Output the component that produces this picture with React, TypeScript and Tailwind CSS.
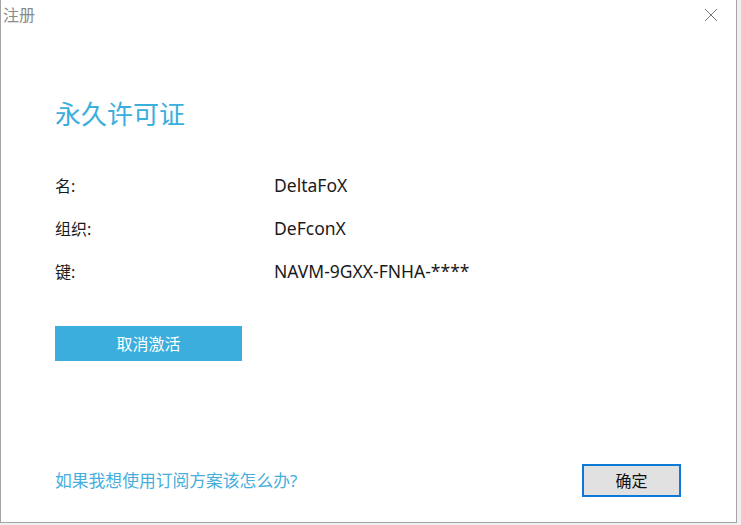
export default function App() {
  return (
    <div
      className="w-[741px] h-[525px] bg-[#f0f0f0] overflow-hidden"
      style={{ fontFamily: '"Noto Sans", "Noto Sans CJK SC", sans-serif' }}
    >
      <div className="w-[737px] h-[523px] bg-white border-l border-r border-b border-[#a5a5a5] flex flex-col">
        {/* title bar */}
        <div className="h-[30px] flex items-start justify-between">
          <span className="pl-[2px] pt-[5px] text-[16px] leading-[20px] text-[#8a8a8a]">注册</span>
          <button className="w-[30px] h-[30px] mr-[10px] flex items-center justify-center">
            <svg width="14" height="14" viewBox="0 0 14 14" fill="none" stroke="#7a7a7a" strokeWidth="1">
              <path d="M1 1L13 13M13 1L1 13" />
            </svg>
          </button>
        </div>

        <div className="flex-1 flex flex-col pl-[54px] pr-[55px]">
          <h1 className="mt-[71px] text-[26px] leading-[27px] text-[#3aaedc] font-normal">永久许可证</h1>

          <div className="mt-[36px] flex flex-col text-[16px] text-[#1a1a1a]">
            {[
              ["名:", "DeltaFoX"],
              ["组织:", "DeFconX"],
              ["键:", "NAVM-9GXX-FNHA-****"],
            ].map(([k, v]) => (
              <div key={k} className="h-[43px] flex items-center">
                <span className="w-[219px]">{k}</span>
                <span className="text-[17.5px]">{v}</span>
              </div>
            ))}
          </div>

          <button className="mt-[33px] w-[187px] h-[35px] bg-[#3caedd] text-white text-[16px] flex items-center justify-center">
            取消激活
          </button>

          <div className="mt-auto mb-[25px] flex items-center justify-between">
            <a className="text-[16.8px] text-[#45aedc] cursor-pointer">如果我想使用订阅方案该怎么办?</a>
            <button className="w-[99px] h-[33px] bg-[#e1e1e1] border-2 border-[#0a7ad6] text-[16px] text-[#111] flex items-center justify-center">
              确定
            </button>
          </div>
        </div>
      </div>
    </div>
  );
}
